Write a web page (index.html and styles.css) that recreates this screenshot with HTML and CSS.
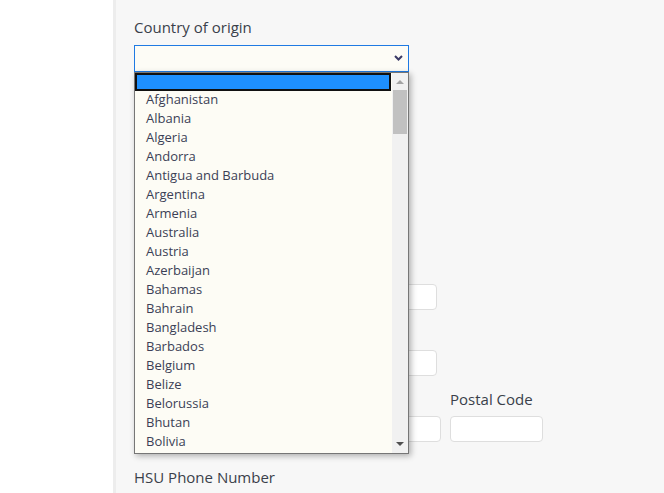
FILE: index.html
```html
<!DOCTYPE html>
<html lang="en">
  <head>
    <meta charset="UTF-8" />
    <meta name="viewport" content="width=device-width, initial-scale=1.0" />
    <title>Application - Personal Information</title>
    <link rel="stylesheet" href="styles.css">
  </head>
  <body>
    <aside class="sidebar"></aside>

    <main class="content">
      <form class="app-form">
        <div class="field country-field">
          <label for="country">Country of origin</label>
          <div class="select-wrap">
            <div class="select-box" id="country" tabindex="0"></div>
            <svg class="chevron" width="9" height="6" viewBox="0 0 9 6">
              <path d="M1 1 L4.5 4.5 L8 1" fill="none" stroke="#3b3a66" stroke-width="2" />
            </svg>

            <div class="dropdown">
              <ul class="options">
                <li class="option blank selected"></li>
                <li class="option">Afghanistan</li>
                <li class="option">Albania</li>
                <li class="option">Algeria</li>
                <li class="option">Andorra</li>
                <li class="option">Antigua and Barbuda</li>
                <li class="option">Argentina</li>
                <li class="option">Armenia</li>
                <li class="option">Australia</li>
                <li class="option">Austria</li>
                <li class="option">Azerbaijan</li>
                <li class="option">Bahamas</li>
                <li class="option">Bahrain</li>
                <li class="option">Bangladesh</li>
                <li class="option">Barbados</li>
                <li class="option">Belgium</li>
                <li class="option">Belize</li>
                <li class="option">Belorussia</li>
                <li class="option">Bhutan</li>
                <li class="option">Bolivia</li>
              </ul>
              <div class="scrollbar">
                <span class="arrow up"></span>
                <span class="thumb"></span>
                <span class="arrow down"></span>
              </div>
            </div>
          </div>
        </div>

        <!-- labels of these fields sit under the open list -->
        <div class="field no-label">
          <input type="text" class="wide" aria-label="Address Line 1" />
        </div>

        <div class="field no-label">
          <input type="text" class="wide" aria-label="Address Line 2" />
        </div>

        <div class="field-row">
          <div class="field no-label">
            <input type="text" aria-label="City" />
          </div>
          <div class="field no-label">
            <input type="text" aria-label="State" />
          </div>
          <div class="field">
            <label for="postal">Postal Code</label>
            <input type="text" id="postal" />
          </div>
        </div>

        <div class="field phone-field">
          <label for="phone">HSU Phone Number</label>
          <input type="text" id="phone" class="wide" />
        </div>
      </form>
    </main>
  </body>
</html>
```

FILE: styles.css
```css
body {
  font-family: "Open Sans", "Liberation Sans", Arial, sans-serif;
  background-color: #f7f7f7;
  color: #3a3f4a;
  margin: 0;
  padding: 0;
  display: flex;
  height: 100vh;
  overflow: hidden;
}

.sidebar {
  width: 113px;
  flex-shrink: 0;
  background-color: #ffffff;
  border-right: 3px solid #ededed;
}

.content {
  flex: 1;
  padding: 17px 0 0 18px;
}

.app-form {
  width: 420px;
}

.field {
  margin-bottom: 13px;
}

.field.no-label {
  padding-top: 27px;
}

.field label {
  display: block;
  font-size: 15px;
  line-height: 20px;
  margin-bottom: 7px;
}

.field input[type="text"] {
  display: block;
  box-sizing: border-box;
  width: 100%;
  height: 26px;
  padding: 4px 8px;
  border: 1px solid #dedede;
  border-radius: 4px;
  background-color: #ffffff;
  font-family: inherit;
  font-size: 13px;
}

.field input.wide {
  width: 303px;
}

.field-row {
  display: grid;
  grid-template-columns: 205px 93px 93px;
  column-gap: 9px;
}

.phone-field {
  margin-top: 12px;
}

/* country select (open) */
.country-field {
  margin-bottom: 185px;
}

.country-field label {
  margin-bottom: 8px;
}

.select-wrap {
  position: relative;
  width: 275px;
}

.select-box {
  box-sizing: border-box;
  height: 27px;
  border: 1px solid #1f7ae3;
  background-color: #fdfcf6;
  outline: none;
}

.chevron {
  position: absolute;
  right: 6px;
  top: 10px;
}

.dropdown {
  position: absolute;
  top: 27px;
  left: 0;
  z-index: 10;
  box-sizing: border-box;
  width: 275px;
  height: 382px;
  display: flex;
  border: 1px solid #767676;
  background-color: #fdfcf5;
  box-shadow: 2px 2px 6px rgba(0, 0, 0, 0.3);
}

.options {
  flex: 1;
  list-style: none;
  margin: 0;
  padding: 0;
  font-size: 13px;
  color: #3b3f55;
}

.option {
  height: 19px;
  line-height: 17px;
  padding-left: 11px;
  white-space: nowrap;
}

.option.blank {
  height: 18px;
}

.option.selected {
  box-sizing: border-box;
  background-color: #1e90ff;
  border: 2px solid #111111;
  margin-right: 1px;
}

.scrollbar {
  width: 16px;
  background-color: #f1f1f1;
  position: relative;
}

.thumb {
  position: absolute;
  left: 1px;
  top: 17px;
  width: 14px;
  height: 44px;
  background-color: #c1c1c1;
}

.arrow {
  position: absolute;
  left: 4px;
  width: 0;
  height: 0;
  border-left: 4px solid transparent;
  border-right: 4px solid transparent;
}

.arrow.up {
  top: 7px;
  border-bottom: 4px solid #a3a3a3;
}

.arrow.down {
  bottom: 7px;
  border-top: 4px solid #505050;
}
```
